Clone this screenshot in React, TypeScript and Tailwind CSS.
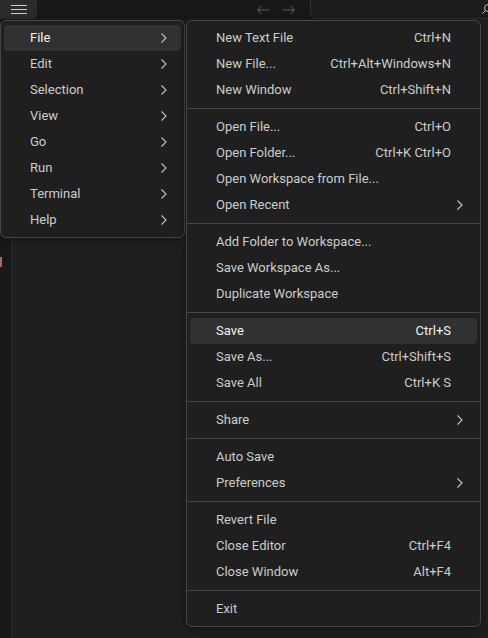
import React from 'react'

type Item =
  | { kind: 'item'; label: string; shortcut?: string; submenu?: boolean; active?: boolean }
  | { kind: 'sep' }

const fileMenu: Item[] = [
  { kind: 'item', label: 'New Text File', shortcut: 'Ctrl+N' },
  { kind: 'item', label: 'New File...', shortcut: 'Ctrl+Alt+Windows+N' },
  { kind: 'item', label: 'New Window', shortcut: 'Ctrl+Shift+N' },
  { kind: 'sep' },
  { kind: 'item', label: 'Open File...', shortcut: 'Ctrl+O' },
  { kind: 'item', label: 'Open Folder...', shortcut: 'Ctrl+K Ctrl+O' },
  { kind: 'item', label: 'Open Workspace from File...' },
  { kind: 'item', label: 'Open Recent', submenu: true },
  { kind: 'sep' },
  { kind: 'item', label: 'Add Folder to Workspace...' },
  { kind: 'item', label: 'Save Workspace As...' },
  { kind: 'item', label: 'Duplicate Workspace' },
  { kind: 'sep' },
  { kind: 'item', label: 'Save', shortcut: 'Ctrl+S', active: true },
  { kind: 'item', label: 'Save As...', shortcut: 'Ctrl+Shift+S' },
  { kind: 'item', label: 'Save All', shortcut: 'Ctrl+K S' },
  { kind: 'sep' },
  { kind: 'item', label: 'Share', submenu: true },
  { kind: 'sep' },
  { kind: 'item', label: 'Auto Save' },
  { kind: 'item', label: 'Preferences', submenu: true },
  { kind: 'sep' },
  { kind: 'item', label: 'Revert File' },
  { kind: 'item', label: 'Close Editor', shortcut: 'Ctrl+F4' },
  { kind: 'item', label: 'Close Window', shortcut: 'Alt+F4' },
  { kind: 'sep' },
  { kind: 'item', label: 'Exit' },
]

const topMenu: Item[] = [
  { kind: 'item', label: 'File', submenu: true, active: true },
  { kind: 'item', label: 'Edit', submenu: true },
  { kind: 'item', label: 'Selection', submenu: true },
  { kind: 'item', label: 'View', submenu: true },
  { kind: 'item', label: 'Go', submenu: true },
  { kind: 'item', label: 'Run', submenu: true },
  { kind: 'item', label: 'Terminal', submenu: true },
  { kind: 'item', label: 'Help', submenu: true },
]

function Chevron() {
  return (
    <svg width="8" height="12" viewBox="0 0 8 12" fill="none" className="shrink-0">
      <path d="M1.5 1.5 L6 6 L1.5 10.5" stroke="#c5c5c5" strokeWidth="1.1" />
    </svg>
  )
}

// separators run edge to edge, so they pull out past the list padding
function MenuList({ items }: { items: Item[] }) {
  return (
    <div className="flex flex-col">
      {items.map((it, i) =>
        it.kind === 'sep' ? (
          <div key={i} className="my-[5px] -mx-[4px] h-px bg-[#454545]" />
        ) : (
          <div
            key={i}
            className={[
              'flex h-[26px] items-center rounded-[4px] pl-[26px] pr-[13px] font-normal',
              it.active ? 'bg-[#313131] text-[#f2f2f2]' : 'text-[#cccccc]',
            ].join(' ')}
          >
            <span className="flex-1 whitespace-nowrap">{it.label}</span>
            {it.shortcut && <span className="whitespace-nowrap pr-[13px]">{it.shortcut}</span>}
            {it.submenu && <Chevron />}
          </div>
        ),
      )}
    </div>
  )
}

export default function App() {
  return (
    <div
      className="relative h-[638px] w-[488px] overflow-hidden bg-[#1f1f1f] text-[13px]"
      style={{ fontFamily: 'Roboto, "Noto Sans", sans-serif' }}
    >
      {/* title bar */}
      <div className="flex h-[19px] items-center bg-[#181818]">
        <div className="flex h-[19px] w-[37px] flex-col items-center justify-center gap-[3px] rounded-br-[5px] bg-[#2b2b2b]">
          <span className="block h-px w-[16px] bg-[#cccccc]" />
          <span className="block h-px w-[16px] bg-[#cccccc]" />
          <span className="block h-px w-[16px] bg-[#cccccc]" />
        </div>
        <div className="ml-[219px] flex items-center gap-[12px]">
          <svg width="14" height="10" viewBox="0 0 14 10" fill="none">
            <path d="M13 5H1.5M5.5 1L1.5 5L5.5 9" stroke="#5e5e5e" strokeWidth="1" />
          </svg>
          <svg width="14" height="10" viewBox="0 0 14 10" fill="none">
            <path d="M1 5H12.5M8.5 1L12.5 5L8.5 9" stroke="#5e5e5e" strokeWidth="1" />
          </svg>
        </div>
        <div className="ml-[14px] flex h-[19px] flex-1 items-center justify-end rounded-bl-[6px] border-b border-l border-[#2f2f2f] bg-[#1c1c1c]">
          <svg width="6" height="12" viewBox="0 0 6 12" fill="none">
            <circle cx="6" cy="5" r="3.5" stroke="#bbbbbb" strokeWidth="1" />
            <path d="M3.5 7.5L0.5 10.5" stroke="#bbbbbb" strokeWidth="1" />
          </svg>
        </div>
      </div>

      {/* workbench body */}
      <div className="flex h-[619px]">
        <div className="relative w-[12px] border-r border-[#2b2b2b] bg-[#181818]">
          <div className="absolute left-0 top-[238px] h-[10px] w-[2px] bg-[#b0695a]" />
        </div>
        <div className="flex-1 bg-[#1f1f1f]" />
      </div>

      {/* menubar dropdown */}
      <div className="absolute left-0 top-[20px] w-[185px] rounded-[6px] border border-[#454545] bg-[#1f1f1f] px-[3px] py-[4px] shadow-[0_2px_8px_rgba(0,0,0,0.36)]">
        <MenuList items={topMenu} />
      </div>

      {/* file submenu */}
      <div className="absolute left-[186px] top-[20px] w-[295px] rounded-[6px] border border-[#454545] bg-[#1f1f1f] px-[3px] py-[4px] shadow-[0_2px_8px_rgba(0,0,0,0.36)]">
        <MenuList items={fileMenu} />
      </div>
    </div>
  )
}
